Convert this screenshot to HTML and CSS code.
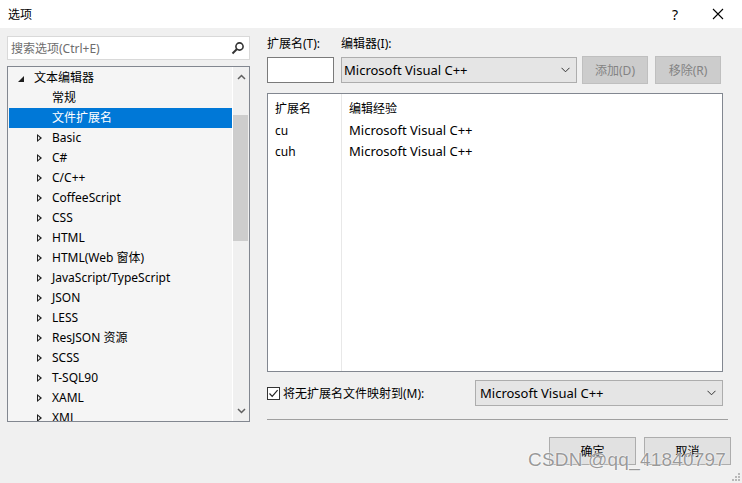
FILE: index.html
```html
<!DOCTYPE html>
<html lang="zh-CN">
<head>
<meta charset="utf-8">
<title>选项</title>
<link rel="stylesheet" href="styles.css">
</head>
<body>
<div class="window">
  <div class="titlebar">
    <span class="title">选项</span>
    <span class="help">?</span>
    <span class="close">
      <svg width="12" height="12" viewBox="0 0 12 12"><path d="M1 1 L11 11 M11 1 L1 11" stroke="#000" stroke-width="1.1" fill="none"/></svg>
    </span>
  </div>
  <div class="content">
    <div class="left">
      <div class="search">
        <span class="search-ph">搜索选项(Ctrl+E)</span>
        <svg class="search-ico" width="14" height="14" viewBox="0 0 14 14"><circle cx="8.5" cy="5.5" r="3.6" stroke="#333" stroke-width="1.6" fill="none"/><path d="M6 8 L1.5 12.5" stroke="#333" stroke-width="2" fill="none"/></svg>
      </div>
      <div class="tree">
        <div class="tree-items">
          <div class="row lvl0"><span class="tri-open"></span>文本编辑器</div>
          <div class="row lvl1">常规</div>
          <div class="row lvl1 sel">文件扩展名</div>
          <div class="row lvl1"><span class="tri"></span>Basic</div>
          <div class="row lvl1"><span class="tri"></span>C#</div>
          <div class="row lvl1"><span class="tri"></span>C/C++</div>
          <div class="row lvl1"><span class="tri"></span>CoffeeScript</div>
          <div class="row lvl1"><span class="tri"></span>CSS</div>
          <div class="row lvl1"><span class="tri"></span>HTML</div>
          <div class="row lvl1"><span class="tri"></span>HTML(Web 窗体)</div>
          <div class="row lvl1"><span class="tri"></span>JavaScript/TypeScript</div>
          <div class="row lvl1"><span class="tri"></span>JSON</div>
          <div class="row lvl1"><span class="tri"></span>LESS</div>
          <div class="row lvl1"><span class="tri"></span>ResJSON 资源</div>
          <div class="row lvl1"><span class="tri"></span>SCSS</div>
          <div class="row lvl1"><span class="tri"></span>T-SQL90</div>
          <div class="row lvl1"><span class="tri"></span>XAML</div>
          <div class="row lvl1"><span class="tri"></span>XML</div>
        </div>
        <div class="vscroll">
          <svg class="arrow" width="9" height="6" viewBox="0 0 9 6"><path d="M1 5 L4.5 1.5 L8 5" stroke="#606060" stroke-width="1.5" fill="none"/></svg>
          <div class="track"><div class="thumb"></div></div>
          <svg class="arrow" width="9" height="6" viewBox="0 0 9 6"><path d="M1 1 L4.5 4.5 L8 1" stroke="#606060" stroke-width="1.5" fill="none"/></svg>
        </div>
      </div>
    </div>
    <div class="right">
      <div class="fields">
        <div class="field ext">
          <label>扩展名(T):</label>
          <div class="textbox"></div>
        </div>
        <div class="field editor">
          <label>编辑器(I):</label>
          <div class="combo"><span>Microsoft Visual C++</span><svg width="9" height="6" viewBox="0 0 9 6"><path d="M0.5 0.8 L4.5 4.8 L8.5 0.8" stroke="#333" stroke-width="1" fill="none"/></svg></div>
        </div>
        <div class="btn disabled add">添加(D)</div>
        <div class="btn disabled remove">移除(R)</div>
      </div>
      <div class="listview">
        <div class="col c1">
          <div class="cell head">扩展名</div>
          <div class="cell">cu</div>
          <div class="cell">cuh</div>
        </div>
        <div class="col c2">
          <div class="cell head">编辑经验</div>
          <div class="cell">Microsoft Visual C++</div>
          <div class="cell">Microsoft Visual C++</div>
        </div>
      </div>
      <div class="maprow">
        <div class="check">
          <span class="box"><svg width="11" height="11" viewBox="0 0 11 11"><path d="M1.5 5.5 L4.2 8.3 L9.6 2.2" stroke="#222" stroke-width="1.2" fill="none"/></svg></span>
          <span>将无扩展名文件映射到(M):</span>
        </div>
        <div class="combo wide"><span>Microsoft Visual C++</span><svg width="9" height="6" viewBox="0 0 9 6"><path d="M0.5 0.8 L4.5 4.8 L8.5 0.8" stroke="#333" stroke-width="1" fill="none"/></svg></div>
      </div>
      <div class="sep"></div>
      <div class="actions">
        <div class="btn big">确定</div>
        <div class="btn big">取消</div>
      </div>
    </div>
  </div>
  <div class="watermark">CSDN @qq_41840797</div>
  <svg class="grip" width="10" height="10" viewBox="0 0 10 10"><g fill="#b8b8b8"><rect x="8" y="2" width="2" height="2"/><rect x="5" y="5" width="2" height="2"/><rect x="8" y="5" width="2" height="2"/><rect x="2" y="8" width="2" height="2"/><rect x="5" y="8" width="2" height="2"/><rect x="8" y="8" width="2" height="2"/></g></svg>
</div>
</body>
</html>
```

FILE: styles.css
```css
* { box-sizing: border-box; }
html, body { margin: 0; padding: 0; }
body {
  width: 742px;
  height: 483px;
  overflow: hidden;
  background: #f0f0f0;
  font-family: "Noto Sans", "Noto Sans CJK SC", sans-serif;
  font-size: 12px;
  color: #000;
}
.window {
  position: relative;
  width: 742px;
  height: 483px;
  background: #f0f0f0;
}
.titlebar {
  height: 28px;
  background: #fff;
  display: flex;
  align-items: center;
  padding-left: 8px;
}
.title { flex: 1; font-size: 12px; }
.help { width: 14px; margin-right: 30px; text-align: center; font-size: 14px; }
.close { width: 12px; margin-right: 18px; display: flex; }

.content {
  display: flex;
  padding: 8px 0 0 7px;
}
.left { width: 243px; display: flex; flex-direction: column; gap: 6px; }
.search {
  height: 24px;
  background: #fff;
  border: 1px solid #d9d9d9;
  display: flex;
  align-items: center;
  padding: 0 4px 0 3px;
}
.search-ph { flex: 1; color: #6d6d6d; }
.search-ico { display: block; }

.tree {
  height: 356px;
  border: 1px solid #828790;
  background: #f5f5f5;
  display: flex;
  overflow: hidden;
}
.tree-items {
  flex: 1;
  padding: 1px 0 0 1px;
  overflow: hidden;
}
.row {
  height: 20px;
  line-height: 20px;
  display: flex;
  align-items: center;
  white-space: nowrap;
}
.lvl0 { padding-left: 9px; }
.lvl1 { padding-left: 43px; }
.lvl1:has(.tri) { padding-left: 28px; }
.sel { background: #0078d7; color: #fff; }
.tri-open {
  width: 0; height: 0;
  border-left: 6px solid transparent;
  border-bottom: 6px solid #1e1e1e;
  margin: 2px 10px 0 0;
}
.tri {
  width: 5px; height: 9px;
  margin-right: 10px;
  position: relative;
}
.tri::before {
  content: "";
  position: absolute;
  left: 0; top: 0;
  width: 0; height: 0;
  border-top: 4.5px solid transparent;
  border-bottom: 4.5px solid transparent;
  border-left: 5px solid #1e1e1e;
}
.tri::after {
  content: "";
  position: absolute;
  left: 1px; top: 2px;
  width: 0; height: 0;
  border-top: 2.5px solid transparent;
  border-bottom: 2.5px solid transparent;
  border-left: 2.8px solid #f5f5f5;
}
.vscroll {
  width: 17px;
  background: #f0f0f0;
  border-left: 1px solid #fff;
  display: flex;
  flex-direction: column;
  align-items: center;
}
.arrow { margin: 7px 0; display: block; }
.track { flex: 1; width: 100%; padding-top: 28px; }
.thumb { width: 15px; height: 126px; background: #cdcdcd; }

.right {
  margin-left: 17px;
  width: 464px;
  display: flex;
  flex-direction: column;
}
.fields {
  display: flex;
  align-items: flex-end;
}
.field { display: flex; flex-direction: column; gap: 5px; }
.field label { line-height: 16px; }
.ext { width: 74px; }
.textbox {
  width: 67px;
  height: 26px;
  background: #fff;
  border: 1px solid #7a7a7a;
}
.editor { width: 236px; }
.combo {
  height: 26px;
  background: #e5e5e5;
  border: 1px solid #adadad;
  display: flex;
  align-items: center;
  justify-content: space-between;
  padding: 0 6px 0 2px;
  font-size: 13px;
}
.combo svg { display: block; }
.btn {
  height: 28px;
  display: flex;
  align-items: center;
  justify-content: center;
  background: #e1e1e1;
  border: 1px solid #adadad;
}
.btn.disabled {
  background: #cccccc;
  border-color: #bfbfbf;
  color: #838383;
  width: 66px;
  margin-bottom: -1px;
}
.add { margin-left: 5px; }
.remove { margin-left: 7px; }

.listview {
  margin-top: 10px;
  width: 456px;
  height: 279px;
  background: #fff;
  border: 1px solid #828790;
  display: flex;
}
.col { padding-top: 3px; }
.c1 { width: 74px; border-right: 1px solid #e8e8e8; padding-left: 7px; }
.c2 { flex: 1; padding-left: 7px; }
.cell { height: 21px; line-height: 21px; }
.cell.head { height: 23px; line-height: 23px; }
.c2 .cell { font-size: 13px; }
.c2 .cell.head { font-size: 12px; }

.maprow {
  margin-top: 8px;
  display: flex;
  align-items: center;
  justify-content: space-between;
  width: 456px;
}
.check { display: flex; align-items: center; gap: 3px; }
.box {
  width: 13px; height: 13px;
  border: 1px solid #333;
  background: #fff;
  display: flex;
  align-items: center;
  justify-content: center;
}
.box svg { display: block; }
.combo.wide { width: 248px; height: 26px; padding-left: 4px; }

.sep {
  margin-top: 13px;
  width: 461px;
  height: 1px;
  background: #a0a0a0;
}
.actions {
  margin-top: 17px;
  display: flex;
  justify-content: flex-end;
  gap: 8px;
  width: 464px;
}
.btn.big { width: 87px; }

.watermark {
  position: absolute;
  left: 528px;
  top: 449px;
  font-family: "Liberation Sans", sans-serif;
  font-size: 19px;
  color: rgba(120,120,120,0.75);
  text-shadow: 0 0 2px #fff, 0 0 1px #fff;
  letter-spacing: 0.2px;
  white-space: nowrap;
}
.grip { position: absolute; right: 2px; bottom: 2px; }
```
